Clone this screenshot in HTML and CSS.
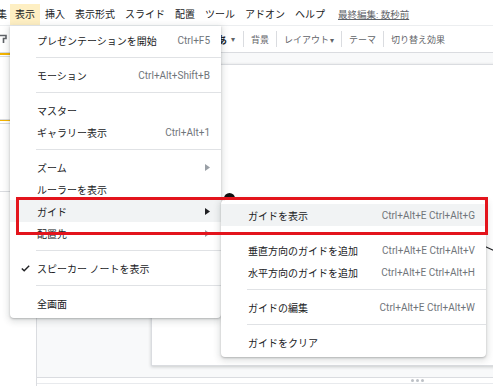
FILE: index.html
```html
<!DOCTYPE html>
<html lang="ja">

<head>
    <meta charset="UTF-8">
    <meta name="viewport" content="width=device-width, initial-scale=1.0">
    <title>スライド - 表示メニュー</title>
    <link rel="stylesheet" href="styles.css">
</head>

<body>
    <div class="app">
        <div class="menubar">
            <span class="mb-item first">集</span>
            <span class="mb-item active">表示</span>
            <span class="mb-item">挿入</span>
            <span class="mb-item">表示形式</span>
            <span class="mb-item">スライド</span>
            <span class="mb-item">配置</span>
            <span class="mb-item">ツール</span>
            <span class="mb-item">アドオン</span>
            <span class="mb-item">ヘルプ</span>
            <span class="last-edit">最終編集: 数秒前</span>
        </div>

        <div class="toolbar">
            <svg class="tb-paint" width="11" height="10" viewBox="0 0 11 10">
                <path d="M0 1.5 H8 V4.5 H5.5 V9" fill="none" stroke="#5f6368" stroke-width="1.6" />
            </svg>
            <span class="tb-spacer"></span>
            <span class="tb-input">あ</span>
            <span class="tb-caret">▾</span>
            <span class="tb-sep"></span>
            <span class="tb-btn">背景</span>
            <span class="tb-sep"></span>
            <span class="tb-btn">レイアウト<span class="tb-caret small">▾</span></span>
            <span class="tb-sep"></span>
            <span class="tb-btn">テーマ</span>
            <span class="tb-sep"></span>
            <span class="tb-btn">切り替え効果</span>
        </div>

        <div class="workspace">
            <div class="filmstrip">
                <div class="thumb selected">
                    <div class="thumb-inner"></div>
                </div>
                <div class="thumb"></div>
            </div>
            <div class="editor">
                <div class="canvas">
                    <div class="slide">
                        <span class="shape-dot"></span>
                        <svg class="shape-line" width="12" height="8" viewBox="0 0 12 8">
                            <path d="M1 1 L12 6" stroke="#202124" stroke-width="1.2" />
                        </svg>
                    </div>
                </div>
                <div class="notes">
                    <div class="notes-grip"><i></i><i></i><i></i></div>
                    <div class="notes-body"></div>
                </div>
            </div>
        </div>

        <!-- 表示 menu -->
        <div class="menu main-menu">
            <div class="menu-item"><span class="label">プレゼンテーションを開始</span><span class="keys">Ctrl+F5</span></div>
            <div class="menu-sep"></div>
            <div class="menu-item"><span class="label">モーション</span><span class="keys">Ctrl+Alt+Shift+B</span></div>
            <div class="menu-sep"></div>
            <div class="menu-item"><span class="label">マスター</span></div>
            <div class="menu-item"><span class="label">ギャラリー表示</span><span class="keys">Ctrl+Alt+1</span></div>
            <div class="menu-sep"></div>
            <div class="menu-item">
                <span class="label">ズーム</span>
                <svg class="arrow" width="5" height="7" viewBox="0 0 5 7"><path d="M0 0 L5 3.5 L0 7Z" /></svg>
            </div>
            <div class="menu-item"><span class="label">ルーラーを表示</span></div>
            <div class="menu-item hover">
                <span class="label">ガイド</span>
                <svg class="arrow dark" width="5" height="7" viewBox="0 0 5 7"><path d="M0 0 L5 3.5 L0 7Z" /></svg>
            </div>
            <div class="menu-item">
                <span class="label">配置先</span>
                <svg class="arrow" width="5" height="7" viewBox="0 0 5 7"><path d="M0 0 L5 3.5 L0 7Z" /></svg>
            </div>
            <div class="menu-sep"></div>
            <div class="menu-item">
                <svg class="check" width="9" height="7" viewBox="0 0 9 7">
                    <path d="M0.8 3.4 L3.2 5.8 L8.2 0.8" fill="none" stroke="#202124" stroke-width="1.4" />
                </svg>
                <span class="label">スピーカー ノートを表示</span>
            </div>
            <div class="menu-sep"></div>
            <div class="menu-item"><span class="label">全画面</span></div>
        </div>

        <!-- ガイド submenu -->
        <div class="menu sub-menu">
            <div class="menu-item hover"><span class="label">ガイドを表示</span><span class="keys">Ctrl+Alt+E Ctrl+Alt+G</span></div>
            <div class="menu-sep"></div>
            <div class="menu-item"><span class="label">垂直方向のガイドを追加</span><span class="keys">Ctrl+Alt+E Ctrl+Alt+V</span></div>
            <div class="menu-item"><span class="label">水平方向のガイドを追加</span><span class="keys">Ctrl+Alt+E Ctrl+Alt+H</span></div>
            <div class="menu-sep"></div>
            <div class="menu-item"><span class="label">ガイドの編集</span><span class="keys">Ctrl+Alt+E Ctrl+Alt+W</span></div>
            <div class="menu-sep"></div>
            <div class="menu-item"><span class="label">ガイドをクリア</span></div>
        </div>

        <div class="callout"></div>
    </div>
</body>

</html>
```

FILE: styles.css
```css
* {
    box-sizing: border-box;
}

body {
    margin: 0;
    font-family: Roboto, "Noto Sans CJK JP", sans-serif;
    color: #202124;
    background-color: #fff;
}

.app {
    position: relative;
    width: 493px;
    height: 386px;
    overflow: hidden;
}

/* menu bar */
.menubar {
    display: flex;
    height: 25px;
    padding-top: 4px;
    font-size: 10px;
    white-space: nowrap;
}

.mb-item {
    height: 21px;
    line-height: 21px;
    padding: 0 5px;
}

.mb-item.first {
    margin-left: -8px;
    padding-right: 3px;
}

.mb-item.active {
    background-color: #feefc3;
}

.last-edit {
    margin-left: 8px;
    line-height: 21px;
    font-size: 9.5px;
    color: #5f6368;
    text-decoration: underline;
}

/* toolbar */
.toolbar {
    display: flex;
    align-items: center;
    height: 28px;
    border-top: 1px solid #eceef0;
    border-bottom: 1px solid #dadce0;
    font-size: 9px;
    color: #5f6368;
    white-space: nowrap;
}

.tb-paint {
    margin-left: -2px;
    flex: none;
}

.tb-spacer {
    flex: 0 0 208px;
}

.tb-input {
    font-size: 10px;
    font-weight: bold;
    color: #202124;
}

.tb-caret {
    margin-left: 4px;
    font-size: 8px;
    color: #5f6368;
}

.tb-caret.small {
    margin-left: 1px;
}

.tb-sep {
    width: 1px;
    height: 16px;
    margin: 0 1px;
    background-color: #dadce0;
}

.tb-caret + .tb-sep {
    margin-left: 8px;
}

.tb-btn {
    padding: 0 6px;
}

/* workspace */
.workspace {
    display: flex;
    height: 333px;
}

.filmstrip {
    width: 41px;
    border-right: 1px solid #dadce0;
    background-color: #fff;
}

.thumb {
    width: 66px;
    height: 69px;
    margin-left: -30px;
    border: 1px solid #dadce0;
    background-color: #fff;
}

.thumb.selected {
    height: 68px;
    margin-bottom: 2px;
    border: 2px solid #f4b400;
}

.thumb-inner {
    height: 100%;
    border: 1px solid #dadce0;
    margin: 1px 0 0;
}

.editor {
    flex: 1;
    display: flex;
    flex-direction: column;
}

.canvas {
    flex: 1;
    background-color: #f8f9fa;
    overflow: hidden;
    padding: 11px 0 0 114px;
}

.slide {
    position: relative;
    width: 537px;
    height: 302px;
    background-color: #fff;
    border: 1px solid #dadce0;
    box-shadow: 0 1px 3px rgba(60, 64, 67, 0.25);
}

.shape-dot {
    position: absolute;
    left: 72px;
    top: 128px;
    width: 11px;
    height: 11px;
    border-radius: 50%;
    background-color: #111;
}

.shape-line {
    position: absolute;
    left: 331px;
    top: 180px;
}

.notes {
    height: 9px;
    border-top: 1px solid #dadce0;
    background-color: #fff;
}

.notes-grip {
    display: flex;
    gap: 2px;
    height: 5px;
    padding: 1px 0 0 374px;
}

.notes-grip i {
    width: 3px;
    height: 3px;
    border-radius: 50%;
    background-color: #bdc1c6;
}

.notes-body {
    border-top: 1px solid #e8eaed;
    height: 3px;
}

/* dropdown menus */
.menu {
    position: absolute;
    background-color: #fff;
    font-size: 10px;
    white-space: nowrap;
    box-shadow: 0 2px 6px 2px rgba(60, 64, 67, 0.15), 0 1px 2px rgba(60, 64, 67, 0.3);
}

.main-menu {
    left: 10px;
    top: 26px;
    width: 211px;
    padding: 3px 0 4px;
    border-radius: 0 0 4px 4px;
}

.sub-menu {
    left: 221px;
    top: 200px;
    width: 265px;
    padding: 4px 0;
    border-radius: 4px;
}

.menu-item {
    position: relative;
    display: flex;
    align-items: center;
    height: 22px;
    padding: 0 11px 0 27px;
}

.menu-item.hover {
    background-color: #f1f3f4;
}

.menu-item .label {
    flex: 1;
}

.menu-item .keys {
    font-family: Roboto, sans-serif;
    color: #70757a;
}

.arrow {
    fill: #9aa0a6;
}

.arrow.dark {
    fill: #202124;
}

.check {
    position: absolute;
    left: 11px;
    top: 8px;
}

.menu-sep {
    height: 1px;
    margin: 6px 0 6px 26px;
    background-color: #e0e2e5;
}

/* red highlight drawn over the screenshot */
.callout {
    position: absolute;
    left: 16px;
    top: 197px;
    width: 472px;
    height: 38px;
    border: 3px solid #e3141c;
}
```
